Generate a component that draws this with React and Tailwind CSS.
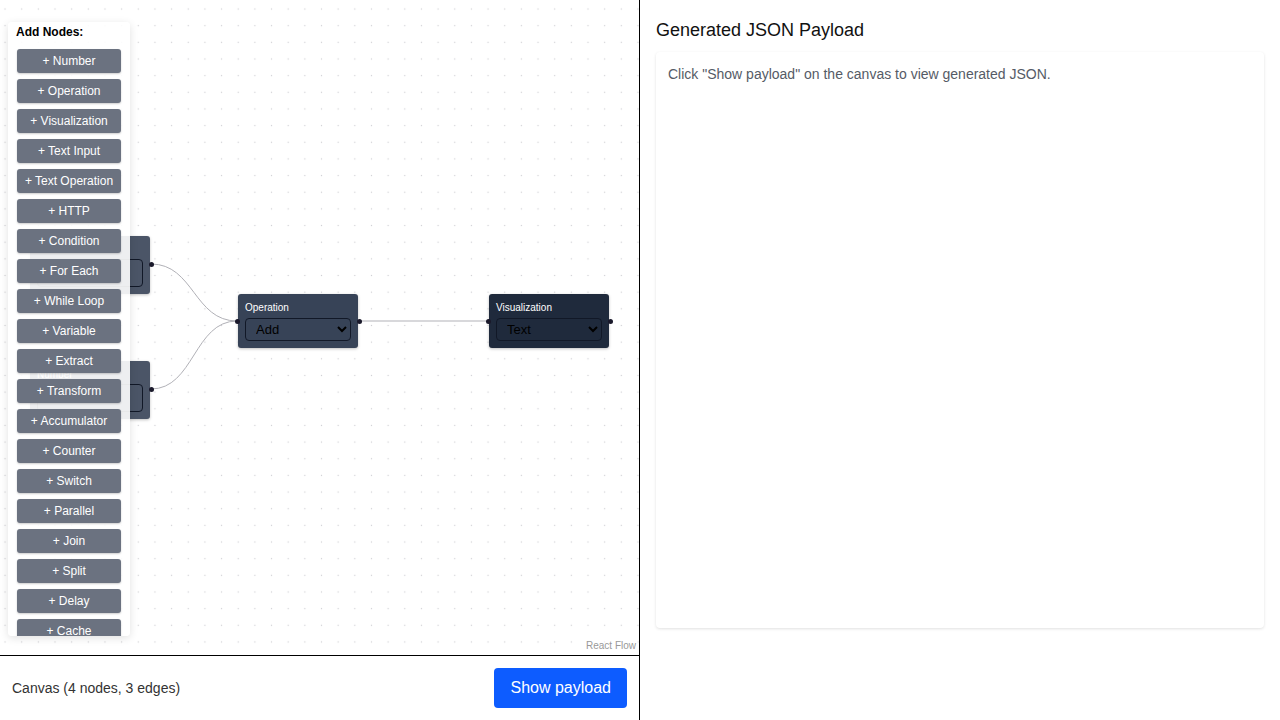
const NODE_TYPES = [
  'Number', 'Operation', 'Visualization', 'Text Input', 'Text Operation', 'HTTP',
  'Condition', 'For Each', 'While Loop', 'Variable', 'Extract', 'Transform',
  'Accumulator', 'Counter', 'Switch', 'Parallel', 'Join', 'Split', 'Delay', 'Cache',
];

function Handle({ x, y }) {
  return <div className="absolute w-[5px] h-[5px] rounded-full bg-[#1a192b]" style={{ left: x - 2.5, top: y - 2.5 }} />;
}

function FlowNode({ x, y, label, value, bg }) {
  return (
    <div
      className={`absolute w-[120px] h-[54px] rounded-[3px] shadow-[0_1px_3px_rgba(0,0,0,0.25)] px-[7px] pt-[7px] ${bg}`}
      style={{ left: x, top: y }}
    >
      <div className="text-[10px] leading-[13px] text-white">{label}</div>
      <select
        defaultValue={value}
        className="mt-[4px] w-full h-[23px] rounded-[4px] border border-[#111827] bg-transparent text-[13px] text-black pl-[6px]"
      >
        <option>{value}</option>
      </select>
    </div>
  );
}

function NumberNode({ x, y }) {
  return (
    <div
      className="absolute w-[120px] h-[58px] rounded-[3px] shadow-[0_1px_3px_rgba(0,0,0,0.25)] px-[7px] pt-[7px] bg-[#4b5567]"
      style={{ left: x, top: y }}
    >
      <div className="text-[10px] leading-[13px] text-white">Number</div>
      <input
        type="text"
        defaultValue="0"
        className="mt-[3px] w-full h-[28px] rounded-[4px] border border-[#111827] bg-transparent text-[13px] text-black px-2"
      />
    </div>
  );
}

export default function App() {
  return (
    <div className="flex w-[1280px] h-[720px] bg-white font-['Liberation_Sans',Arial,sans-serif]">
      {/* Canvas side */}
      <div className="w-[640px] flex flex-col border-r border-black">
        <div className="relative h-[656px] border-b border-black overflow-hidden bg-white bg-[radial-gradient(#cfcfd3_0.8px,transparent_1px)] bg-[size:16.67px_16.67px] bg-[position:-3.3px_0.7px]">
          {/* edges */}
          <svg className="absolute inset-0" width="639" height="655">
            <path d="M151,264 C194,264 194,321 237,321" fill="none" stroke="#b1b1b7" strokeWidth="1" />
            <path d="M151,389 C194,389 194,321 237,321" fill="none" stroke="#b1b1b7" strokeWidth="1" />
            <path d="M359,321 L488,321" fill="none" stroke="#b1b1b7" strokeWidth="1" />
          </svg>

          <NumberNode x={30} y={236} />
          <NumberNode x={30} y={361} />
          <FlowNode x={238} y={294} label="Operation" value="Add" bg="bg-[#374357]" />
          <FlowNode x={489} y={294} label="Visualization" value="Text" bg="bg-[#1f2a3c]" />

          <Handle x={151} y={264} />
          <Handle x={151} y={389} />
          <Handle x={237} y={321} />
          <Handle x={359} y={321} />
          <Handle x={488} y={321} />
          <Handle x={610} y={321} />

          {/* add nodes panel */}
          <div className="absolute left-2 top-[22px] w-[122px] h-[614px] overflow-hidden rounded bg-white/90 shadow-[0_2px_8px_rgba(0,0,0,0.12)] px-[8px] pt-px">
            <div className="text-xs font-bold text-black leading-[18px] mb-[8px]">Add Nodes:</div>
            <div className="flex flex-col gap-[6px] pl-px">
              {NODE_TYPES.map((t) => (
                <button
                  key={t}
                  className="w-[104px] h-[24px] shrink-0 rounded-[3px] bg-[#6b7280] text-white text-xs shadow-[0_1px_2px_rgba(0,0,0,0.2)]"
                >
                  + {t}
                </button>
              ))}
            </div>
          </div>

          <div className="absolute right-[1px] bottom-[2px] text-[10px] text-[#999] bg-white/50 px-[2px]">React Flow</div>
        </div>

        <div className="flex-1 flex items-center justify-between px-3">
          <span className="text-sm text-[#333]">Canvas (4 nodes, 3 edges)</span>
          <button className="h-10 px-4 rounded bg-[#0d5cff] text-white text-base">Show payload</button>
        </div>
      </div>

      {/* Payload side */}
      <div className="flex-1 px-4 pt-[18px] bg-white">
        <h2 className="text-lg text-[#111] leading-6 mb-[10px]">Generated JSON Payload</h2>
        <div className="h-[576px] rounded bg-white shadow-[0_1px_3px_rgba(0,0,0,0.12)] px-3 pt-[12px]">
          <p className="text-sm text-[#555b66]">Click "Show payload" on the canvas to view generated JSON.</p>
        </div>
      </div>
    </div>
  );
}
